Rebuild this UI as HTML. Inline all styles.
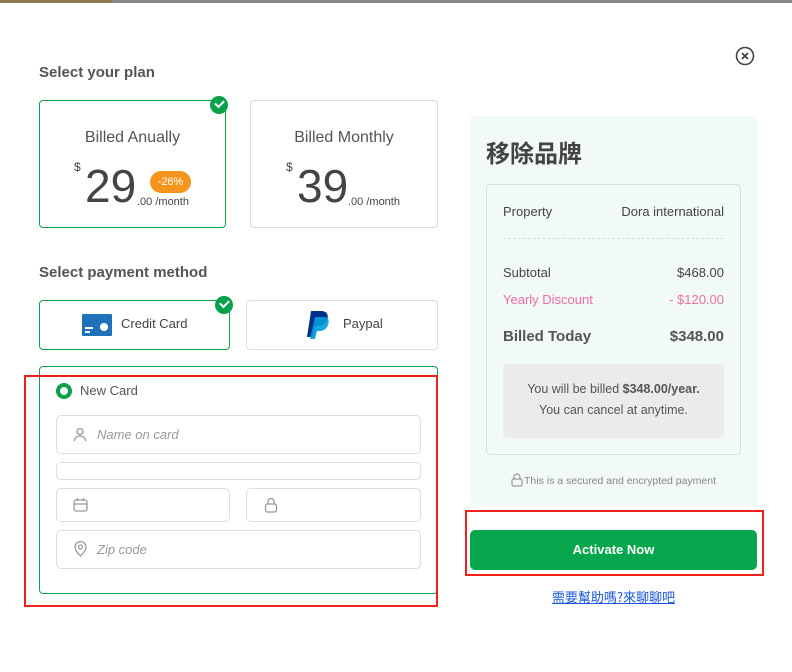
<!DOCTYPE html>
<html><head><meta charset="utf-8"><style>
*{box-sizing:border-box;margin:0;padding:0}
body{width:792px;height:672px;background:#fff;font-family:"Liberation Sans","Noto Sans CJK TC",sans-serif;color:#444;position:relative;overflow:hidden}
.a{position:absolute}
.box{position:absolute;border:1px solid #dcdce6;border-radius:4px;background:#fff}
.g{border-color:#0aa14b}
.chk{position:absolute;width:18px;height:18px;border-radius:50%;background:#0aa14b}
.chk:after{content:"";position:absolute;left:5px;top:4px;width:7px;height:4px;border-left:2px solid #fff;border-bottom:2px solid #fff;transform:rotate(-45deg)}
.h{font-size:15px;font-weight:bold;color:#555}
.inp{position:absolute;border:1px solid #dcdce6;border-radius:5px}
.ph{position:absolute;font-style:italic;color:#999;font-size:13px}
.row{position:absolute;left:503px;right:68px;font-size:13px;display:flex;justify-content:space-between}
</style></head><body>
<div class="a" style="left:0;top:0;width:792px;height:3px;background:#888"></div>
<div class="a" style="left:0;top:0;width:112px;height:3px;background:#8c7a4a"></div>
<svg class="a" style="left:735px;top:46px" width="20" height="20" viewBox="0 0 20 20"><circle cx="10" cy="10" r="8.5" fill="none" stroke="#444" stroke-width="1.6"/><path d="M7 7l6 6M13 7l-6 6" stroke="#444" stroke-width="1.8"/></svg>
<div class="a h" style="left:39px;top:64px">Select your plan</div>

<div class="box g" style="left:39px;top:100px;width:187px;height:128px"></div>
<div class="chk" style="left:210px;top:96px"></div>
<div class="a" style="left:39px;top:129px;width:187px;text-align:center;font-size:16px;color:#555">Billed Anually</div>
<div class="a" style="left:74px;top:160px;font-size:12px">$</div>
<div class="a" style="left:85px;top:160px;font-size:46px;line-height:52px;color:#444">29</div>
<div class="a" style="left:150px;top:171px;width:41px;height:22px;border-radius:11px;background:#f7941d;color:#fff;font-size:11px;text-align:center;line-height:22px">-26%</div>
<div class="a" style="left:137px;top:196px;font-size:11px">.00 /month</div>

<div class="box" style="left:250px;top:100px;width:188px;height:128px"></div>
<div class="a" style="left:250px;top:129px;width:188px;text-align:center;font-size:16px;color:#555">Billed Monthly</div>
<div class="a" style="left:286px;top:160px;font-size:12px">$</div>
<div class="a" style="left:297px;top:160px;font-size:46px;line-height:52px;color:#444">39</div>
<div class="a" style="left:348px;top:196px;font-size:11px">.00 /month</div>

<div class="a h" style="left:39px;top:264px">Select payment method</div>
<div class="box g" style="left:39px;top:300px;width:191px;height:50px"></div>
<div class="chk" style="left:215px;top:296px"></div>
<svg class="a" style="left:82px;top:314px" width="30" height="22"><rect width="30" height="22" rx="1" fill="#1f72b8"/><rect x="3" y="13" width="8" height="2" fill="#fff"/><rect x="3" y="17" width="5" height="2" fill="#fff"/><circle cx="22" cy="13" r="4" fill="#fff"/></svg>
<div class="a" style="left:121px;top:316px;font-size:13px">Credit Card</div>
<div class="box" style="left:246px;top:300px;width:192px;height:50px"></div>
<svg class="a" style="left:306px;top:310px" width="26" height="30" viewBox="0 0 26 30"><path d="M5 1h10c6 0 8 4 6 9-2 5-6 6-10 6H9l-2 11H1z" fill="#003087"/><path d="M9 7h9c4 0 6 3 4 8-2 5-5 6-9 6h-2l-2 8H4z" fill="#009cde" opacity=".9"/></svg>
<div class="a" style="left:343px;top:316px;font-size:13px">Paypal</div>

<div class="box g" style="left:39px;top:366px;width:399px;height:228px"></div>
<div class="a" style="left:24px;top:375px;width:414px;height:232px;border:2px solid #f0201a"></div>
<div class="a" style="left:56px;top:383px;width:16px;height:16px;border-radius:50%;border:4px solid #0aa14b"></div>
<div class="a" style="left:80px;top:383px;font-size:13px;color:#555">New Card</div>
<div class="inp" style="left:56px;top:415px;width:365px;height:39px"></div>
<svg class="a" style="left:73px;top:427px" width="14" height="15" fill="none" stroke="#999" stroke-width="1.3"><circle cx="7" cy="4.5" r="3"/><path d="M1.5 14c0-3 2.5-5 5.5-5s5.5 2 5.5 5"/></svg>
<div class="ph" style="left:97px;top:427px">Name on card</div>
<div class="inp" style="left:56px;top:462px;width:365px;height:18px"></div>
<div class="inp" style="left:56px;top:488px;width:174px;height:34px"></div>
<svg class="a" style="left:73px;top:498px" width="15" height="14" fill="none" stroke="#999" stroke-width="1.3"><rect x="1" y="2" width="13" height="11" rx="2"/><path d="M1 6h13M4.5 0v3M10.5 0v3"/></svg>
<div class="inp" style="left:246px;top:488px;width:175px;height:34px"></div>
<svg class="a" style="left:264px;top:497px" width="14" height="16" fill="none" stroke="#999" stroke-width="1.3"><rect x="1.5" y="7" width="11" height="8" rx="2"/><path d="M4 7V4.5a3 3 0 016 0V7"/></svg>
<div class="inp" style="left:56px;top:530px;width:365px;height:39px"></div>
<svg class="a" style="left:74px;top:541px" width="13" height="16" fill="none" stroke="#999" stroke-width="1.3"><path d="M6.5 15s-5.5-5-5.5-9a5.5 5.5 0 0111 0c0 4-5.5 9-5.5 9z"/><circle cx="6.5" cy="6" r="2"/></svg>
<div class="ph" style="left:97px;top:542px">Zip code</div>

<div class="a" style="left:470px;top:116px;width:287px;height:390px;background:#f1faf4;border-radius:4px"></div>
<div class="a" style="left:486px;top:136px;font-size:24px;font-weight:bold;color:#444;font-family:'Noto Sans CJK TC',sans-serif;line-height:32px">移除品牌</div>
<div class="box" style="left:486px;top:184px;width:255px;height:271px;background:transparent"></div>
<div class="row" style="top:204px"><span>Property</span><span>Dora international</span></div>
<div class="a" style="left:503px;top:238px;width:221px;border-top:1px dashed #d8dce6"></div>
<div class="row" style="top:265px"><span>Subtotal</span><span>$468.00</span></div>
<div class="row" style="top:292px;color:#f06ca6"><span>Yearly Discount</span><span>- $120.00</span></div>
<div class="row" style="top:328px;font-size:15px;font-weight:bold;color:#555"><span>Billed Today</span><span>$348.00</span></div>
<div class="a" style="left:503px;top:364px;width:221px;height:74px;background:#ebebeb;border-radius:5px;text-align:center;font-size:12.5px;line-height:21px;padding-top:15px;color:#555">You will be billed <b>$348.00/year.</b><br>You can cancel at anytime.</div>
<svg class="a" style="left:511px;top:473px" width="12" height="14" fill="none" stroke="#999" stroke-width="1.2"><rect x="1" y="6" width="10" height="7" rx="1.5"/><path d="M3 6V4a3 3 0 016 0v2"/></svg>
<div class="a" style="left:524px;top:475px;font-size:10.5px;color:#888">This is a secured and encrypted payment</div>
<div class="a" style="left:465px;top:510px;width:299px;height:66px;border:2px solid #f0201a"></div>
<div class="a" style="left:470px;top:530px;width:287px;height:40px;background:#05a64c;border-radius:5px;color:#fff;font-size:13px;font-weight:bold;text-align:center;line-height:40px">Activate Now</div>
<div class="a" style="left:470px;top:587px;width:287px;text-align:center;font-size:13px;color:#1a56db;text-decoration:underline;font-family:'Noto Sans CJK TC',sans-serif">需要幫助嗎?來聊聊吧</div>
</body></html>
